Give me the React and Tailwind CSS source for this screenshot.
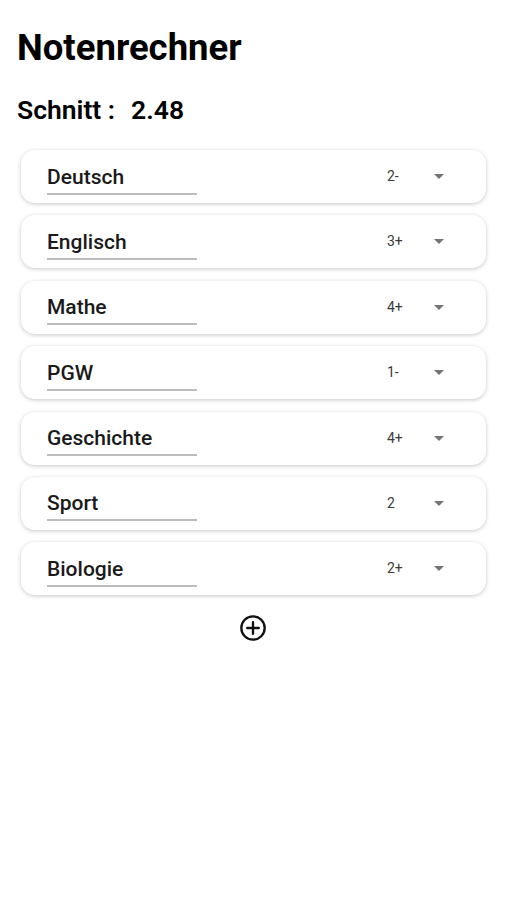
import { useState } from 'react';

const subjects = [
  { name: 'Deutsch', grade: '2-' },
  { name: 'Englisch', grade: '3+' },
  { name: 'Mathe', grade: '4+' },
  { name: 'PGW', grade: '1-' },
  { name: 'Geschichte', grade: '4+' },
  { name: 'Sport', grade: '2' },
  { name: 'Biologie', grade: '2+' },
];

const SubjectCard = ({ subject }) => (
  <div className="h-[53px] rounded-[14px] bg-white shadow-[0_1px_4px_rgba(0,0,0,0.22)] flex items-center pl-[26px] pr-[40px]">
    <div className="w-[150px] h-[42px] flex flex-col justify-end">
      <span className="text-[21px] font-medium text-[#1a1a1a] leading-none pb-[5px]">{subject.name}</span>
      <div className="h-[2px] bg-[#bdbdbd] mb-[3px]"></div>
    </div>
    <div className="flex-1"></div>
    <span className="text-[14px] text-[#3a3a3a] w-[47px]">{subject.grade}</span>
    <svg width="10" height="5" viewBox="0 0 10 5" className="mr-[2px]">
      <path d="M0 0 L10 0 L5 5 Z" fill="#757575" />
    </svg>
  </div>
);

const App = () => {
  const [list] = useState(subjects);

  return (
    <div className="min-h-[900px] bg-white font-['Roboto',sans-serif]">
      <div className="pt-[27px] px-[17px]">
        <h1 className="text-[36.5px] font-bold text-black leading-[42px]">Notenrechner</h1>
        <div className="mt-[26px] text-[26.5px] font-semibold text-black leading-[30px] flex">
          <span>Schnitt :</span>
          <span className="ml-[16px]">2.48</span>
        </div>
      </div>
      <div className="mt-[25px] px-[21px] mr-[-1px] flex flex-col gap-[12.4px]">
        {list.map((s) => (
          <SubjectCard key={s.name} subject={s} />
        ))}
      </div>
      <div className="flex justify-center mt-[19px]">
        <svg width="28" height="28" viewBox="0 0 24 24" fill="none" stroke="#111" strokeWidth="2" strokeLinecap="round">
          <circle cx="12" cy="12" r="10" />
          <path d="M12 7v10M7 12h10" />
        </svg>
      </div>
    </div>
  );
};

export default App;
